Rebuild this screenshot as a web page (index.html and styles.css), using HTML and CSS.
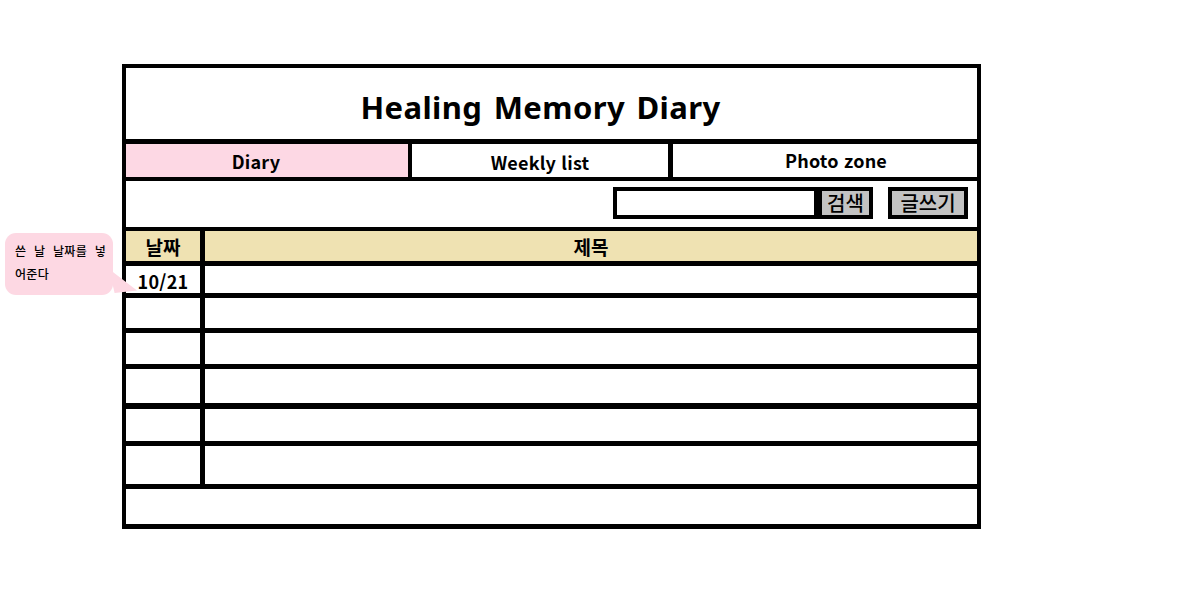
FILE: index.html
```html
<!DOCTYPE html>
<html lang="ko">
<head>
<meta charset="utf-8">
<title>Healing Memory Diary</title>
<link rel="stylesheet" href="styles.css">
</head>
<body>
<div class="page">
  <div class="note">
    <p class="note-text">쓴 날 날짜를 넣<br>어준다</p>
  </div>
  <div class="board">
    <header class="title">Healing Memory Diary</header>
    <nav class="tabs">
      <div class="tab tab-diary">Diary</div>
      <div class="tab tab-weekly">Weekly list</div>
      <div class="tab tab-photo">Photo zone</div>
    </nav>
    <div class="toolbar">
      <input class="search-input" type="text">
      <button class="btn btn-search">검색</button>
      <button class="btn btn-write">글쓰기</button>
    </div>
    <div class="row row-head">
      <div class="cell cell-date">날짜</div>
      <div class="cell cell-title">제목</div>
    </div>
    <div class="row row-1">
      <div class="cell cell-date date-text">10/21</div>
      <div class="cell cell-title"></div>
    </div>
    <div class="row row-2">
      <div class="cell cell-date"></div>
      <div class="cell cell-title"></div>
    </div>
    <div class="row row-3">
      <div class="cell cell-date"></div>
      <div class="cell cell-title"></div>
    </div>
    <div class="row row-4">
      <div class="cell cell-date"></div>
      <div class="cell cell-title"></div>
    </div>
    <div class="row row-5">
      <div class="cell cell-date"></div>
      <div class="cell cell-title"></div>
    </div>
    <div class="row row-6">
      <div class="cell cell-date"></div>
      <div class="cell cell-title"></div>
    </div>
    <div class="footer-row"></div>
  </div>
</div>
</body>
</html>
```

FILE: styles.css
```css
* { box-sizing: border-box; }

html, body {
  margin: 0;
  padding: 0;
  background: #ffffff;
}

body {
  font-family: "Noto Sans CJK KR", "Noto Sans", sans-serif;
  color: #000;
}

.page {
  position: relative;
  width: 1185px;
  height: 609px;
  padding-top: 64px;
  padding-left: 122px;
}

/* speech bubble note */
.note {
  position: absolute;
  left: 5px;
  top: 233px;
  width: 108px;
  height: 62px;
  background: #fdd8e3;
  border-radius: 11px;
}
.note::after {
  content: "";
  position: absolute;
  left: 104px;
  top: 36px;
  width: 28px;
  height: 24px;
  background: #fdd8e3;
  clip-path: polygon(0 0, 100% 90%, 20% 100%);
}
.note-text {
  margin: 0;
  padding: 6px 0 0 10px;
  font-size: 12px;
  font-weight: 500;
  line-height: 23px;
  word-spacing: 4px;
  letter-spacing: 0.3px;
}

/* board */
.board {
  width: 859px;
  border: 4px solid #000;
  border-bottom-width: 5px;
  display: flex;
  flex-direction: column;
}

.title {
  height: 76px;
  border-bottom: 5px solid #000;
  display: flex;
  align-items: center;
  justify-content: center;
  padding-right: 22px;
  padding-top: 6px;
  font-family: "Noto Sans", "Noto Sans CJK KR", sans-serif;
  font-size: 31px;
  font-weight: 700;
  letter-spacing: 0.4px;
  word-spacing: 3px;
}

.tabs {
  display: flex;
  height: 37px;
  border-bottom: 4px solid #000;
}
.tab {
  display: flex;
  align-items: center;
  justify-content: center;
  font-size: 18px;
  font-weight: 700;
  letter-spacing: 0.2px;
}
.tab-diary {
  width: 286px;
  background: #fdd8e4;
  border-right: 4px solid #000;
  padding-right: 22px;
}
.tab-weekly {
  width: 261px;
  border-right: 5px solid #000;
  padding-top: 2px;
}
.tab-photo {
  flex: 1;
  padding-left: 22px;
  padding-bottom: 2px;
}

.toolbar {
  height: 50px;
  border-bottom: 4px solid #000;
  display: flex;
  justify-content: flex-end;
  align-items: flex-start;
  padding-top: 6px;
  padding-right: 9px;
}
.search-input {
  width: 205px;
  height: 32px;
  border: 4px solid #000;
  background: #fff;
  margin: 0;
  padding: 0;
}
.btn {
  height: 32px;
  border: 4px solid #000;
  background: #c3c3c3;
  margin: 0;
  padding: 0;
  font-family: "Noto Sans CJK KR", sans-serif;
  font-size: 20px;
  font-weight: 500;
  line-height: 22px;
  color: #000;
}
.btn-search {
  width: 55px;
}
.btn-write {
  width: 80px;
  margin-left: 15px;
}

/* table rows */
.row {
  display: flex;
  border-bottom: 5px solid #000;
}
.cell {
  display: flex;
  align-items: center;
  justify-content: center;
}
.cell-date {
  width: 79px;
  border-right: 5px solid #000;
}
.cell-title {
  flex: 1;
}
.row-head {
  height: 35px;
  background: #efe2b2;
  font-size: 19px;
  font-weight: 700;
}
.row-1 { height: 32px; }
.row-2 { height: 35px; }
.row-3 { height: 36px; }
.row-4 { height: 40px; border-bottom-width: 6px; }
.row-5 { height: 37px; }
.row-6 { height: 43px; }
.date-text {
  font-size: 18px;
  font-weight: 700;
  padding-top: 2px;
  letter-spacing: 0.3px;
}
.footer-row {
  height: 35px;
}
```
